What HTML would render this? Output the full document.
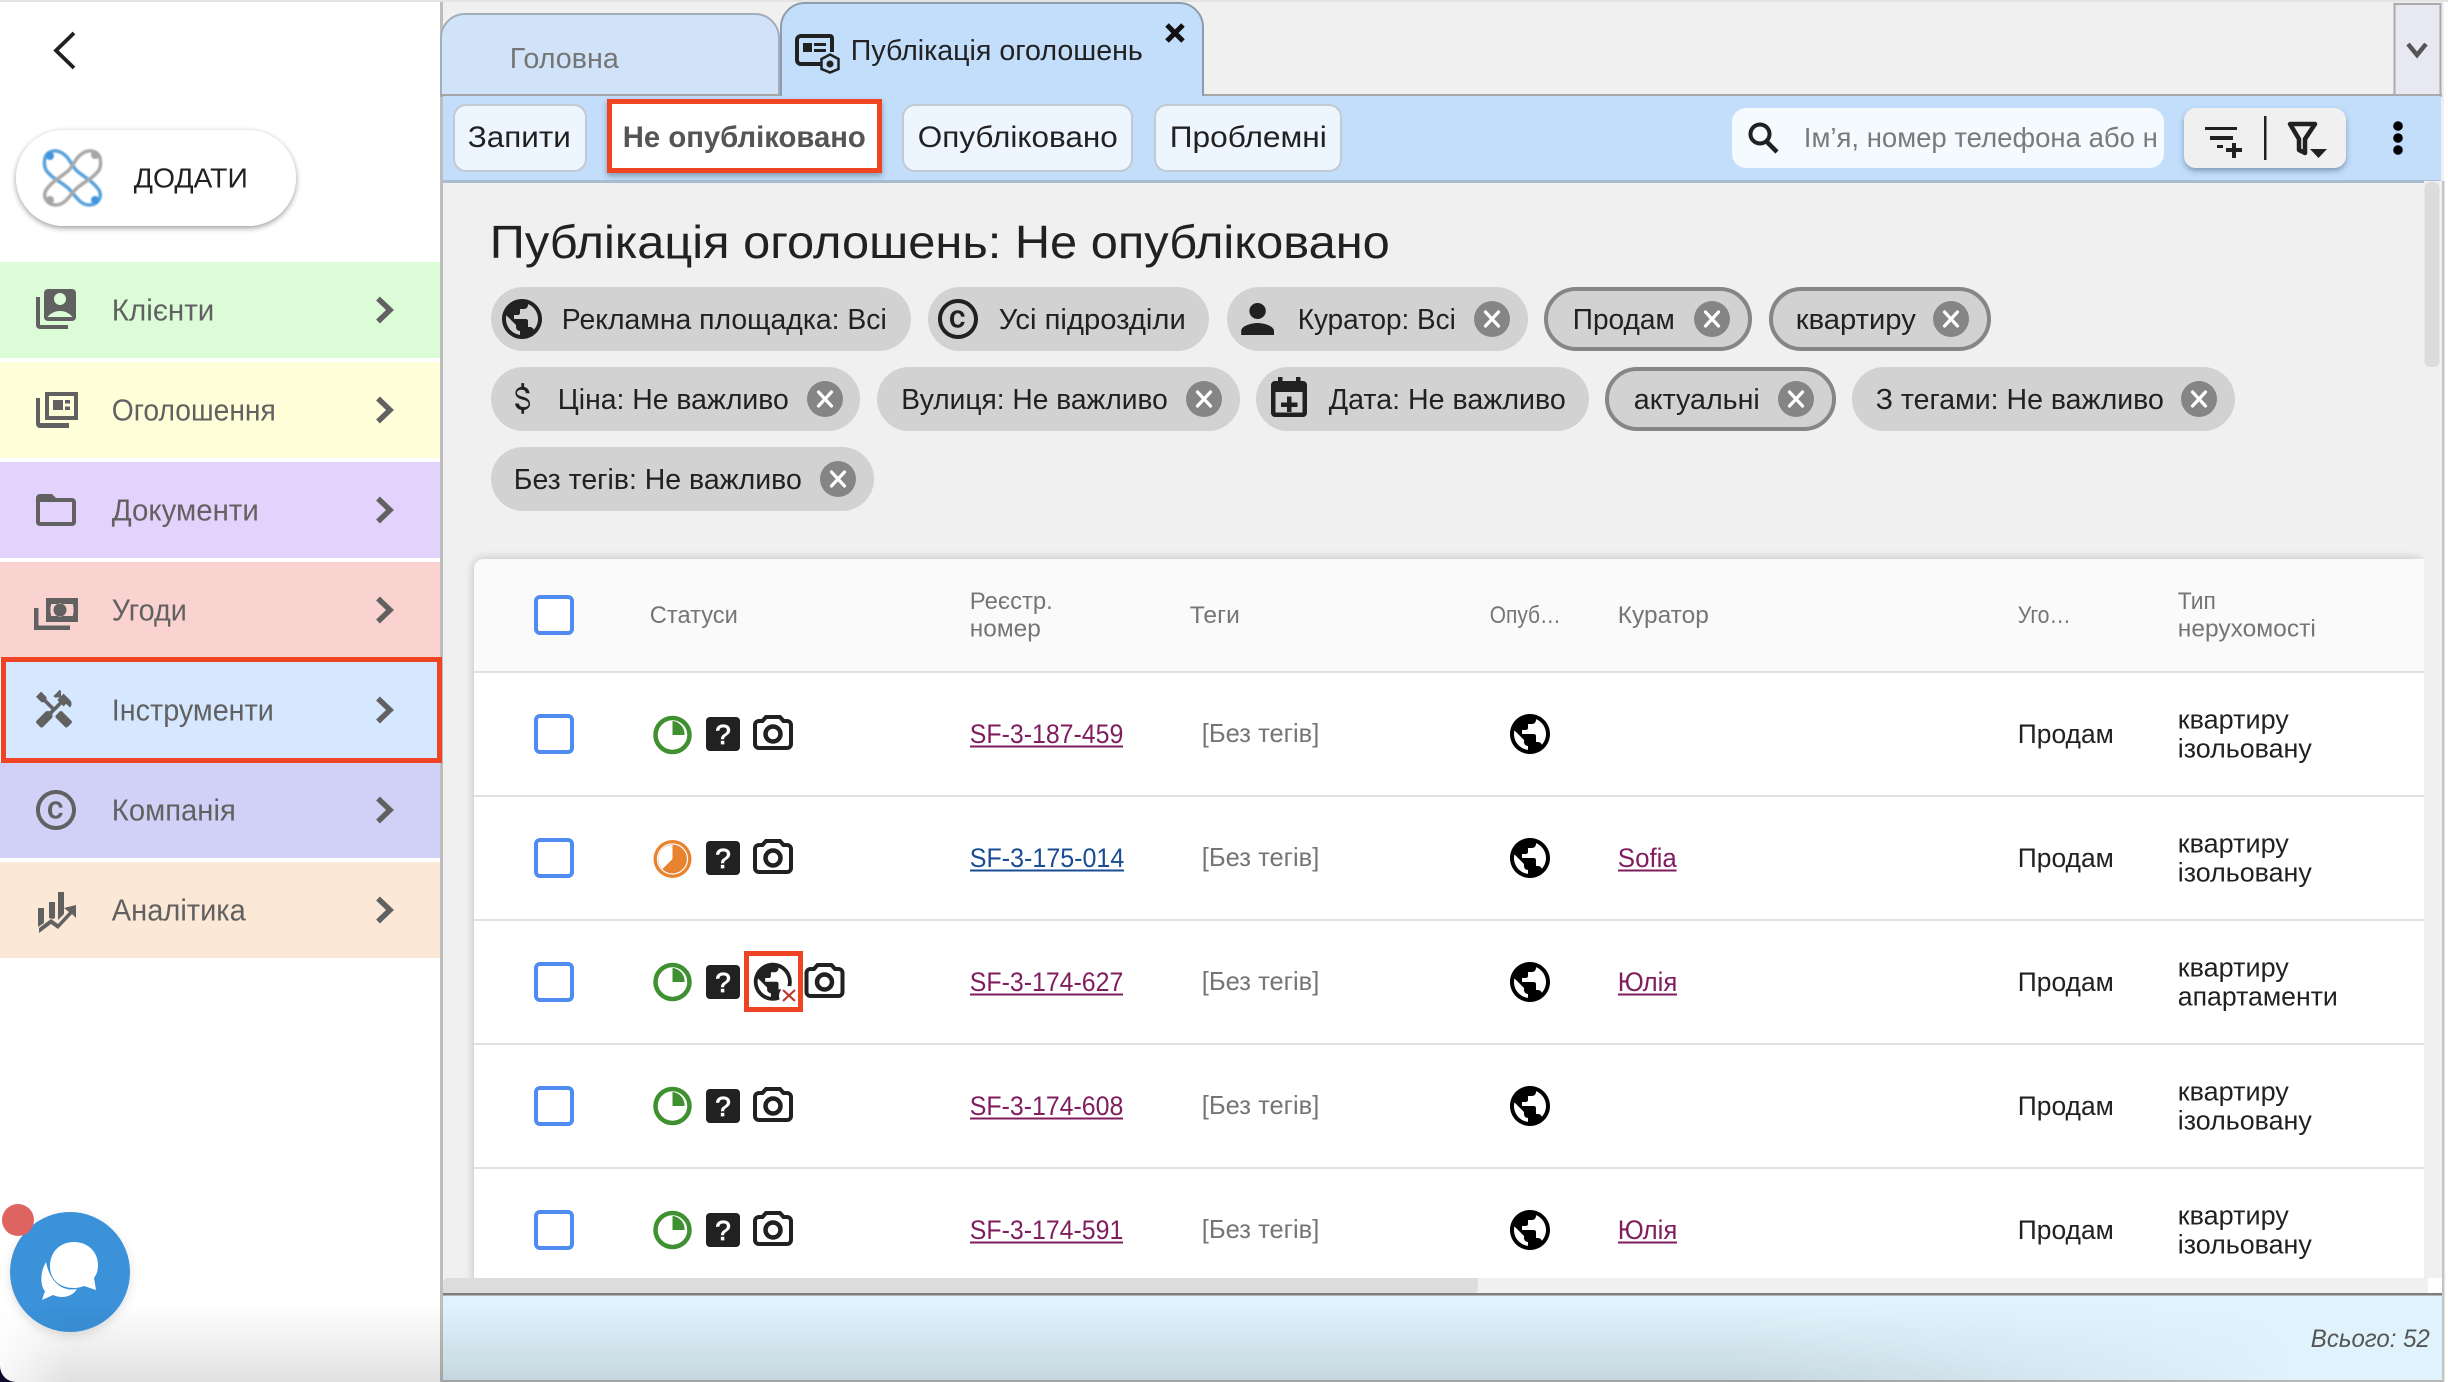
<!DOCTYPE html>
<html lang="uk"><head><meta charset="utf-8"><title>Публікація оголошень</title>
<style>
html,body{margin:0;padding:0;background:#fff;width:2448px;height:1382px;overflow:hidden}
svg{display:block}
text{font-family:"Liberation Sans",sans-serif;white-space:pre;transform:translateX(-1.2px)}
.m{font-size:31px;fill:#616161}
.b{font-size:30px;fill:#212121}
.c{font-size:28.5px;fill:#212121}
.h{font-size:24px;fill:#757575}
.r{font-size:26.5px;fill:#212121}
.t{font-size:26px;fill:#757575}
.mar{fill:#7f1d5e}.blu{fill:#1a4c94}
.ln{stroke-linecap:butt}
</style></head><body>
<svg xmlns="http://www.w3.org/2000/svg" width="2448" height="1382" viewBox="0 0 2448 1382">
<defs>
<filter id="s1" x="-10%" y="-20%" width="120%" height="150%"><feDropShadow dx="0" dy="2" stdDeviation="3" flood-color="#000" flood-opacity=".4"/></filter>
<filter id="s2" x="-5%" y="-20%" width="110%" height="150%"><feDropShadow dx="0" dy="3" stdDeviation="3" flood-color="#33475f" flood-opacity=".45"/></filter>
<filter id="s3" x="-2%" y="-3%" width="104%" height="106%"><feGaussianBlur stdDeviation="5"/></filter>
<filter id="bl"><feGaussianBlur stdDeviation=".8"/></filter>
<filter id="s4" x="-20%" y="-20%" width="140%" height="140%"><feDropShadow dx="0" dy="4" stdDeviation="5" flood-color="#000" flood-opacity=".12"/></filter>
<linearGradient id="vg" x1="0" y1="0" x2="0" y2="1"><stop offset="0" stop-color="#000" stop-opacity="0"/><stop offset="1" stop-color="#000" stop-opacity=".12"/></linearGradient>
<linearGradient id="hg" x1="0" y1="0" x2="1" y2="0"><stop offset="0" stop-color="#fff" stop-opacity=".2"/><stop offset=".03" stop-color="#fff"/><stop offset=".75" stop-color="#fff"/><stop offset="1" stop-color="#fff" stop-opacity="0"/></linearGradient>
<mask id="mk" maskUnits="userSpaceOnUse" x="0" y="1290" width="2300" height="92"><rect x="0" y="1290" width="2300" height="92" fill="url(#hg)"/></mask>
<symbol id="globe" viewBox="0 0 24 24" width="24" height="24" overflow="visible"><path fill-rule="evenodd" d="M12 2C6.48 2 2 6.48 2 12s4.48 10 10 10 10-4.48 10-10S17.52 2 12 2zm-1 17.93c-3.95-.49-7-3.85-7-7.93 0-.62.08-1.21.21-1.79L9 15v1c0 1.1.9 2 2 2v1.93zm6.9-2.54c-.26-.81-1-1.39-1.9-1.39h-1v-3c0-.55-.45-1-1-1H8v-2h2c.55 0 1-.45 1-1V7h2c1.1 0 2-.9 2-2v-.41c2.93 1.19 5 4.06 5 7.41 0 2.08-.8 3.97-2.1 5.39z"/></symbol>
<symbol id="copy" viewBox="0 0 24 24" width="24" height="24" overflow="visible"><path fill-rule="evenodd" d="M11.88 9.14c1.28.06 1.61 1.15 1.63 1.66h1.79c-.08-1.98-1.49-3.19-3.45-3.19C9.64 7.61 8 9 8 12.14c0 1.94.93 4.24 3.84 4.24 2.22 0 3.41-1.65 3.44-2.95h-1.79c-.03.59-.45 1.38-1.63 1.44-1.31-.04-1.86-1.06-1.86-2.73 0-2.89 1.28-2.98 1.88-3zM12 2C6.48 2 2 6.48 2 12s4.48 10 10 10 10-4.48 10-10S17.52 2 12 2zm0 18c-4.41 0-8-3.59-8-8s3.59-8 8-8 8 3.59 8 8-3.59 8-8 8z"/></symbol>
<g id="cb"><rect x="-18" y="-18" width="36" height="36" rx="4" fill="#fff" stroke="#4f8bf0" stroke-width="4"/></g>
<g id="q"><rect x="-17" y="-17" width="34" height="34" rx="4" fill="#212121"/><text x="1.200" y="10" text-anchor="middle" style="font-size:28px;font-weight:400;stroke:#fff;stroke-width:.8;fill:#fff">?</text></g>
<g id="cam"><path d="M-13-13h3l3.500-4h14l3.500 4h3.500a4 4 0 0 1 4 4v19a4 4 0 0 1-4 4h-28a4 4 0 0 1-4-4v-19a4 4 0 0 1 4-4z" fill="#fff" stroke="#212121" stroke-width="4" transform="translate(-.5 0)"/><circle cx="0" cy="0" r="7.500" fill="none" stroke="#212121" stroke-width="4.500"/></g>
<g id="gc"><circle r="17" fill="#fff" stroke="#3f9030" stroke-width="4.500"/><path d="M0 0V-14a13 13 0 0 1 12 14Z" fill="#3f9030"/></g>
<g id="x"><circle r="18" fill="#858585"/><path d="M-6.500-7L6.500 7M6.500-7L-6.500 7" stroke="#fff" stroke-width="3.200" stroke-linecap="round"/></g>
<path id="chev" d="M-6-11.500L6 0-6 11.500" fill="none" stroke="#616161" stroke-width="5.500" stroke-linejoin="miter"/>
</defs>

<!-- base -->
<rect width="2448" height="1382" fill="#fff"/>
<rect x="440" y="0" width="2004" height="1382" fill="#f0f0f0"/>
<rect x="0" y="0" width="2448" height="2" fill="#e4e4e4"/>
<rect x="440" y="2" width="3" height="1380" fill="#bdbdbd"/>

<!-- sidebar -->
<path d="M74 33L56 50.500 74 68" fill="none" stroke="#212121" stroke-width="3.800"/>
<rect x="16" y="130" width="280" height="96" rx="48" fill="#fff" filter="url(#s1)"/>
<g fill="none" stroke-width="3.500" filter="url(#bl)">
<path d="M45 158C47 151 55 149 62 153C69 157 70 163 76 170C82 176 92 180 99 190C103 198 97 205 89 205C81 205 76 197 70 190C64 183 52 179 46 170C44 166 44 162 45 158Z" stroke="#5aa3dc"/>
<path d="M100 158C98 151 90 149 83 153C76 157 75 163 69 170C63 176 53 180 46 190C42 198 48 205 56 205C64 205 69 197 75 190C81 183 93 179 99 170C101 166 101 162 100 158Z" stroke="#a9a9a9"/>
<circle cx="50" cy="156" r="4" fill="#3f94dc" stroke="none"/><circle cx="95" cy="155" r="4" fill="#a5a5a5" stroke="none"/><circle cx="50" cy="200" r="4" fill="#a5a5a5" stroke="none"/><circle cx="95" cy="200" r="4" fill="#3f94dc" stroke="none"/>
</g>
<text x="135" y="187.500" textLength="114" lengthAdjust="spacingAndGlyphs" style="font-size:28px;fill:#212121">ДОДАТИ</text>

<rect x="0" y="262" width="440" height="96" fill="#dcfcd8"/>
<rect x="0" y="362" width="440" height="96" fill="#fefed8"/>
<rect x="0" y="462" width="440" height="96" fill="#e3d2fb"/>
<rect x="0" y="562" width="440" height="96" fill="#fad2d0"/>
<rect x="0" y="762" width="440" height="96" fill="#d1d1f8"/>
<rect x="0" y="862" width="440" height="96" fill="#fbe8d6"/>
<rect x="3.500" y="659.500" width="436" height="101" fill="#d5e8ff" stroke="#ef4423" stroke-width="5"/>

<g fill="#616161">
<g transform="translate(32 285) scale(2)"><path fill-rule="evenodd" d="M4 6H2v14c0 1.100.9 2 2 2h14v-2H4V6zm16-4H8c-1.100 0-2 .9-2 2v12c0 1.100.9 2 2 2h12c1.100 0 2-.9 2-2V4c0-1.100-.9-2-2-2zm-6 2c1.660 0 3 1.340 3 3s-1.340 3-3 3-3-1.340-3-3 1.340-3 3-3zM7.760 16c1.470-1.830 3.710-3 6.240-3s4.770 1.170 6.240 3H7.760z"/></g>
<path fill-rule="evenodd" d="M45 392h33v28H45zM49 396v20h25v-20zM53 400h10v10H53zM65 400h5v3.500h-5zM65 406.500h5v3.500h-5zM36 398h4v25h29v5H40a4 4 0 0 1-4-4z"/>
<g transform="translate(32 486) scale(2)"><path d="M20 6h-8l-2-2H4c-1.100 0-1.990.9-1.990 2L2 18c0 1.100.9 2 2 2h16c1.100 0 2-.9 2-2V8c0-1.100-.9-2-2-2zm0 12H4V8h16v10z"/></g>
<path fill-rule="evenodd" d="M46 598h32v24H46zM51 604a4 4 0 0 1-.5 3v6a4 4 0 0 1 .5 3h22a4 4 0 0 1 .5-3v-6a4 4 0 0 1-.5-3zM60 603.500a6.500 6.500 0 1 1 0 13a6.500 6.500 0 1 1 0-13zM34 608h4.500v17.500H70v4.500H34z"/>
<g transform="translate(32.400 688) scale(1.800)"><path d="M21.670 18.170l-5.300-5.300h-.99l-2.540 2.540v.99l5.300 5.300c.39.39 1.020.39 1.410 0l2.120-2.120c.39-.38.39-1.020 0-1.410zM17.340 10.190l1.410-1.410 2.120 2.120c1.170-1.170 1.170-3.070 0-4.240l-3.540-3.540-1.410 1.410V1.710l-.7-.71-3.540 3.540.71.71h2.830l-1.410 1.410 1.060 1.060-2.890 2.890-4.130-4.130V5.060L4.830 2.040 2 4.870 5.030 7.900h1.410l4.130 4.130-.85.85H7.600l-5.300 5.300c-.39.39-.39 1.020 0 1.410l2.120 2.120c.39.39 1.020.39 1.410 0l5.300-5.300v-2.120l5.150-5.150 1.060 1.050z"/></g>
<g transform="translate(32 786) scale(2)"><use href="#copy"/></g>
<path d="M38 908h6v15l-6 4zM49 902h6v16l-2 1-4-1zM58 892h6v22l-6 6zM76 905v13l-4-4-14 15-7-5-12 9v-5l12-9 7 5 11-12-5-4z"/>
</g>
<text class="m" x="113" y="320.500" textLength="102.500" lengthAdjust="spacingAndGlyphs">Клієнти</text>
<text class="m" x="113" y="420.500" textLength="164" lengthAdjust="spacingAndGlyphs">Оголошення</text>
<text class="m" x="113" y="520.500" textLength="147" lengthAdjust="spacingAndGlyphs">Документи</text>
<text class="m" x="113" y="620.500" textLength="75" lengthAdjust="spacingAndGlyphs">Угоди</text>
<text class="m" x="113" y="720.500" textLength="162" lengthAdjust="spacingAndGlyphs">Інструменти</text>
<text class="m" x="113" y="820.500" textLength="124" lengthAdjust="spacingAndGlyphs">Компанія</text>
<text class="m" x="113" y="920.500" textLength="134" lengthAdjust="spacingAndGlyphs">Аналітика</text>
<use href="#chev" x="384" y="310"/><use href="#chev" x="384" y="410"/><use href="#chev" x="384" y="510"/><use href="#chev" x="384" y="610"/><use href="#chev" x="384" y="710"/><use href="#chev" x="384" y="810"/><use href="#chev" x="384" y="910"/>

<!-- chat -->
<circle cx="70" cy="1272" r="60" fill="#3b92d9" filter="url(#s4)"/>
<circle cx="18" cy="1220" r="16" fill="#dd6460"/>
<path d="M46 1262C40 1272 40 1286 45 1291L42 1300 53 1295C62 1299 72 1297 77 1289 62 1292 50 1282 46 1262Z" fill="#fff"/>
<path d="M74 1242C60 1242 50 1252 50 1266 50 1280 60 1288 74 1288 78 1288 81 1287 84 1286L96 1290 94 1278C97 1274 98 1270 98 1265 98 1252 88 1242 74 1242Z" fill="#fff"/>

<!-- tabs -->
<path d="M441 96V38a24 24 0 0 1 24-24h290a24 24 0 0 1 24 24v58" fill="#d0e3f9" stroke="#a3aebb" stroke-width="2"/>
<rect x="440" y="94" width="2002" height="3" fill="#a6a6a6"/>
<path d="M781 96V27a24 24 0 0 1 24-24h374a24 24 0 0 1 24 24v69" fill="#c2defb" stroke="#8e9dae" stroke-width="2"/>
<text x="511" y="68" textLength="109" lengthAdjust="spacingAndGlyphs" style="font-size:29px;fill:#757575">Головна</text>
<text x="852" y="60" textLength="292" lengthAdjust="spacingAndGlyphs" style="font-size:29px;fill:#212121">Публікація оголошень</text>
<path d="M1167 25L1183 41M1183 25L1167 41" stroke="#111" stroke-width="5"/>
<path d="M822 64H801a4 4 0 0 1-4-4V40a4 4 0 0 1 4-4h29a2 2 0 0 1 2 2V52" fill="none" stroke="#212121" stroke-width="4"/>
<rect x="803" y="43" width="9" height="9" fill="#212121"/><rect x="814" y="43" width="12" height="3" fill="#212121"/><rect x="814" y="49" width="12" height="3" fill="#212121"/>
<path d="M830 54.500L838.500 59v10L830 72.500 821.500 69V59Z" fill="none" stroke="#212121" stroke-width="2.500"/><circle cx="830" cy="64" r="3.500" fill="#212121"/>
<rect x="2394.500" y="4" width="46" height="91" fill="#e8e8f2" stroke="#aaa" stroke-width="2"/>
<path d="M2408 44L2417 55 2426 44" fill="none" stroke="#555" stroke-width="4.500"/>

<!-- toolbar -->
<rect x="443" y="96" width="1998" height="85" fill="#c2defb"/>
<rect x="782" y="92" width="420" height="6" fill="#c2defb"/>
<rect x="443" y="180" width="1998" height="3" fill="#a9bdd2"/>
<rect x="454" y="105" width="132" height="66" rx="12" fill="#edf5fe" stroke="#c3c9d0" stroke-width="2"/>
<rect x="609.500" y="101.500" width="270" height="69" fill="#fff" stroke="#ef4423" stroke-width="5" filter="url(#s2)"/>
<rect x="903" y="105" width="229" height="66" rx="12" fill="#edf5fe" stroke="#c3c9d0" stroke-width="2"/>
<rect x="1155" y="105" width="186" height="66" rx="12" fill="#edf5fe" stroke="#c3c9d0" stroke-width="2"/>
<text class="b" x="469" y="147" textLength="103" lengthAdjust="spacingAndGlyphs">Запити</text>
<text class="b" x="624" y="147" textLength="243" lengthAdjust="spacingAndGlyphs" style="font-weight:700;fill:#555">Не опубліковано</text>
<text class="b" x="919" y="147" textLength="200" lengthAdjust="spacingAndGlyphs">Опубліковано</text>
<text class="b" x="1171" y="147" textLength="157" lengthAdjust="spacingAndGlyphs">Проблемні</text>

<rect x="1732" y="108" width="432" height="60" rx="14" fill="#f5faff"/>
<circle cx="1760" cy="134" r="9.500" fill="none" stroke="#212121" stroke-width="4"/><path d="M1767 142L1777 152" stroke="#212121" stroke-width="4.500"/>
<text x="1805" y="147" textLength="354" lengthAdjust="spacingAndGlyphs" style="font-size:28px;fill:#7a7a7a">Ім’я, номер телефона або н</text>
<rect x="2184" y="108" width="162" height="60" rx="12" fill="#f0f0f0" filter="url(#s2)"/>
<g fill="#212121"><rect x="2205" y="127" width="32" height="3"/><rect x="2210" y="136" width="23" height="4"/><rect x="2217" y="145" width="6" height="3"/><rect x="2226" y="148" width="16" height="4"/><rect x="2232" y="143" width="4" height="15"/><rect x="2264" y="116" width="2.500" height="44"/></g>
<path d="M2290 124H2315L2305 139V153L2299 150V139Z" fill="none" stroke="#212121" stroke-width="4.500" stroke-linejoin="round"/>
<path d="M2310 149H2327L2318.500 158Z" fill="#212121"/>
<circle cx="2398" cy="126" r="4.800"/><circle cx="2398" cy="138" r="4.800"/><circle cx="2398" cy="150" r="4.800"/>

<!-- title -->
<text x="491" y="258" textLength="900" lengthAdjust="spacingAndGlyphs" style="font-size:46px;fill:#212121">Публікація оголошень: Не опубліковано</text>

<!-- chips -->
<g fill="#d2d2d2">
<rect x="491" y="287" width="420" height="64" rx="32"/>
<rect x="928" y="287" width="281" height="64" rx="32"/>
<rect x="1227" y="287" width="301" height="64" rx="32"/>
<rect x="491" y="367" width="369" height="64" rx="32"/>
<rect x="877" y="367" width="363" height="64" rx="32"/>
<rect x="1256" y="367" width="333" height="64" rx="32"/>
<rect x="1852" y="367" width="383" height="64" rx="32"/>
<rect x="491" y="447" width="383" height="64" rx="32"/>
</g>
<g fill="#d2d2d2" stroke="#868686" stroke-width="4">
<rect x="1546" y="289" width="204" height="60" rx="30"/>
<rect x="1771" y="289" width="218" height="60" rx="30"/>
<rect x="1607" y="369" width="227" height="60" rx="30"/>
</g>
<g fill="#212121">
<g transform="translate(498 295) scale(2)"><use href="#globe"/></g>
<g transform="translate(934 295) scale(2)"><use href="#copy"/></g>
<g transform="translate(1233 295) scale(2.050 2)"><path d="M12 12c2.210 0 4-1.790 4-4s-1.790-4-4-4-4 1.790-4 4 1.790 4 4 4zm0 2c-2.670 0-8 1.340-8 4v2h16v-2c0-2.660-5.330-4-8-4z"/></g>
<g transform="translate(502 378) scale(1.700)"><path d="M11.800 10.900c-2.270-.59-3-1.200-3-2.150 0-1.090 1.010-1.850 2.700-1.850 1.780 0 2.440.85 2.500 2.100h2.210c-.07-1.720-1.120-3.300-3.210-3.810V3h-1.600v2.160c-1.940.42-3.500 1.680-3.500 3.610 0 2.310 1.910 3.460 4.700 4.130 2.500.6 3 1.480 3 2.410 0 .69-.49 1.790-2.700 1.790-2.060 0-2.870-.92-2.980-2.100h-2.200c.12 2.190 1.760 3.420 3.680 3.830V21h1.600v-2.150c1.950-.37 3.500-1.500 3.500-3.550 0-2.840-2.430-3.810-4.700-4.400z"/></g>
<rect x="1278" y="377" width="4.500" height="8"/><rect x="1296" y="377" width="4.500" height="8"/>
<path fill-rule="evenodd" d="M1275 381h28a4 4 0 0 1 4 4v28a4 4 0 0 1-4 4h-28a4 4 0 0 1-4-4v-28a4 4 0 0 1 4-4zM1275.500 392v20.500h27V392zM1287 396.500h4.500v6h6v4.500h-6v6h-4.500v-6h-6v-4.500h6z"/>
</g>
<text class="c" x="563" y="329" textLength="325" lengthAdjust="spacingAndGlyphs">Рекламна площадка: Всі</text>
<text class="c" x="1000" y="329" textLength="187" lengthAdjust="spacingAndGlyphs">Усі підрозділи</text>
<text class="c" x="1299" y="329" textLength="158" lengthAdjust="spacingAndGlyphs">Куратор: Всі</text>
<text class="c" x="1574" y="329" textLength="102" lengthAdjust="spacingAndGlyphs">Продам</text>
<text class="c" x="1797" y="329" textLength="120" lengthAdjust="spacingAndGlyphs">квартиру</text>
<text class="c" x="559" y="409" textLength="231" lengthAdjust="spacingAndGlyphs">Ціна: Не важливо</text>
<text class="c" x="902.500" y="409" textLength="266.500" lengthAdjust="spacingAndGlyphs">Вулиця: Не важливо</text>
<text class="c" x="1330" y="409" textLength="237" lengthAdjust="spacingAndGlyphs">Дата: Не важливо</text>
<text class="c" x="1635" y="409" textLength="126" lengthAdjust="spacingAndGlyphs">актуальні</text>
<text class="c" x="1877" y="409" textLength="288" lengthAdjust="spacingAndGlyphs">З тегами: Не важливо</text>
<text class="c" x="515" y="489" textLength="288" lengthAdjust="spacingAndGlyphs">Без тегів: Не важливо</text>
<use href="#x" x="1492" y="319"/><use href="#x" x="1712" y="319"/><use href="#x" x="1951" y="319"/>
<use href="#x" x="825" y="399"/><use href="#x" x="1204" y="399"/><use href="#x" x="1796" y="399"/><use href="#x" x="2199" y="399"/>
<use href="#x" x="838" y="479"/>

<!-- table -->
<rect x="474" y="559" width="1950" height="730" rx="10" fill="#000" opacity=".22" filter="url(#s3)"/>
<rect x="2424" y="181" width="18" height="1100" fill="#f0f0f0"/>
<path d="M474 1278V569a10 10 0 0 1 10-10H2424V1278Z" fill="#fff"/>
<path d="M474 671V569a10 10 0 0 1 10-10H2424V671Z" fill="#fafafa"/>
<g fill="#e0e0e0"><rect x="474" y="671" width="1950" height="2"/><rect x="474" y="795" width="1950" height="2"/><rect x="474" y="919" width="1950" height="2"/><rect x="474" y="1043" width="1950" height="2"/><rect x="474" y="1167" width="1950" height="2"/></g>

<!-- vertical scrollbar -->
<rect x="2424.500" y="182" width="15" height="185" rx="6" fill="#dcdcdc"/>

<text class="h" x="651" y="623" textLength="88" lengthAdjust="spacingAndGlyphs">Статуси</text>
<text class="h" x="971" y="609" textLength="83" lengthAdjust="spacingAndGlyphs">Реєстр.</text>
<text class="h" x="971" y="636.500" textLength="71" lengthAdjust="spacingAndGlyphs">номер</text>
<text class="h" x="1191" y="623" textLength="50" lengthAdjust="spacingAndGlyphs">Теги</text>
<text class="h" x="1491" y="623" textLength="71" lengthAdjust="spacingAndGlyphs">Опуб…</text>
<text class="h" x="1619" y="623" textLength="91" lengthAdjust="spacingAndGlyphs">Куратор</text>
<text class="h" x="2019" y="623" textLength="53" lengthAdjust="spacingAndGlyphs">Уго…</text>
<text class="h" x="2179" y="609" textLength="38" lengthAdjust="spacingAndGlyphs">Тип</text>
<text class="h" x="2179" y="636.500" textLength="138" lengthAdjust="spacingAndGlyphs">нерухомості</text>

<use href="#cb" x="554" y="615"/>
<use href="#cb" x="554" y="734"/><use href="#cb" x="554" y="858"/><use href="#cb" x="554" y="982"/><use href="#cb" x="554" y="1106"/><use href="#cb" x="554" y="1230"/>

<!-- statuses -->
<use href="#gc" x="672.500" y="735"/>
<g transform="translate(672.500 859)"><circle r="19" fill="#e8832f"/><circle r="15" fill="none" stroke="#fff" stroke-width="1.200"/><path d="M0 0V-14A14 14 0 0 0-10 10Z" fill="#fff"/></g>
<use href="#gc" x="672.500" y="982"/><use href="#gc" x="672.500" y="1106"/><use href="#gc" x="672.500" y="1230"/>
<use href="#q" x="723" y="734"/><use href="#q" x="723" y="858"/><use href="#q" x="723" y="982"/><use href="#q" x="723" y="1106"/><use href="#q" x="723" y="1230"/>
<use href="#cam" x="773" y="734"/><use href="#cam" x="773" y="858"/><use href="#cam" x="824.500" y="982"/><use href="#cam" x="773" y="1106"/><use href="#cam" x="773" y="1230"/>

<g transform="translate(750 959) scale(1.900)" fill="#212121"><use href="#globe"/></g>
<circle cx="789" cy="996" r="10" fill="#fff"/>
<path d="M783 990L795 1001M795 990L783 1001" stroke="#c0342c" stroke-width="2.200"/>
<rect x="746.500" y="953.500" width="54" height="56" fill="none" stroke="#ef4423" stroke-width="5"/>

<!-- reg numbers -->
<text class="r mar" x="971" y="743" textLength="153.500" lengthAdjust="spacingAndGlyphs">SF-3-187-459</text><rect x="970" y="745.500" width="153" height="2" fill="#7f1d5e"/>
<text class="r blu" x="971" y="867" textLength="154.500" lengthAdjust="spacingAndGlyphs">SF-3-175-014</text><rect x="970" y="869.500" width="154" height="2" fill="#1a4c94"/>
<text class="r mar" x="971" y="991" textLength="153.500" lengthAdjust="spacingAndGlyphs">SF-3-174-627</text><rect x="970" y="993.500" width="153" height="2" fill="#7f1d5e"/>
<text class="r mar" x="971" y="1115" textLength="153.500" lengthAdjust="spacingAndGlyphs">SF-3-174-608</text><rect x="970" y="1117.500" width="153" height="2" fill="#7f1d5e"/>
<text class="r mar" x="971" y="1239" textLength="153.500" lengthAdjust="spacingAndGlyphs">SF-3-174-591</text><rect x="970" y="1241.500" width="153" height="2" fill="#7f1d5e"/>

<text class="t" x="1203" y="742" textLength="117.500" lengthAdjust="spacingAndGlyphs">[Без тегів]</text>
<text class="t" x="1203" y="866" textLength="117.500" lengthAdjust="spacingAndGlyphs">[Без тегів]</text>
<text class="t" x="1203" y="990" textLength="117.500" lengthAdjust="spacingAndGlyphs">[Без тегів]</text>
<text class="t" x="1203" y="1114" textLength="117.500" lengthAdjust="spacingAndGlyphs">[Без тегів]</text>
<text class="t" x="1203" y="1238" textLength="117.500" lengthAdjust="spacingAndGlyphs">[Без тегів]</text>

<g fill="#000">
<g transform="translate(1506 710) scale(2)"><use href="#globe"/></g>
<g transform="translate(1506 834) scale(2)"><use href="#globe"/></g>
<g transform="translate(1506 958) scale(2)"><use href="#globe"/></g>
<g transform="translate(1506 1082) scale(2)"><use href="#globe"/></g>
<g transform="translate(1506 1206) scale(2)"><use href="#globe"/></g>
</g>

<text class="r mar" x="1619" y="867" textLength="59" lengthAdjust="spacingAndGlyphs">Sofia</text><rect x="1618" y="869.500" width="58.500" height="2" fill="#7f1d5e"/>
<text class="r mar" x="1619" y="991" textLength="59.500" lengthAdjust="spacingAndGlyphs">Юлія</text><rect x="1618" y="993.500" width="59" height="2" fill="#7f1d5e"/>
<text class="r mar" x="1619" y="1239" textLength="59.500" lengthAdjust="spacingAndGlyphs">Юлія</text><rect x="1618" y="1241.500" width="59" height="2" fill="#7f1d5e"/>

<text class="r" x="2019" y="743" textLength="96" lengthAdjust="spacingAndGlyphs">Продам</text>
<text class="r" x="2019" y="867" textLength="96" lengthAdjust="spacingAndGlyphs">Продам</text>
<text class="r" x="2019" y="991" textLength="96" lengthAdjust="spacingAndGlyphs">Продам</text>
<text class="r" x="2019" y="1115" textLength="96" lengthAdjust="spacingAndGlyphs">Продам</text>
<text class="r" x="2019" y="1239" textLength="96" lengthAdjust="spacingAndGlyphs">Продам</text>

<text class="r" x="2179" y="728.500" textLength="111" lengthAdjust="spacingAndGlyphs">квартиру</text><text class="r" x="2179" y="757.500" textLength="134" lengthAdjust="spacingAndGlyphs">ізольовану</text>
<text class="r" x="2179" y="852.500" textLength="111" lengthAdjust="spacingAndGlyphs">квартиру</text><text class="r" x="2179" y="881.500" textLength="134" lengthAdjust="spacingAndGlyphs">ізольовану</text>
<text class="r" x="2179" y="976.500" textLength="111" lengthAdjust="spacingAndGlyphs">квартиру</text><text class="r" x="2179" y="1005.500" textLength="160" lengthAdjust="spacingAndGlyphs">апартаменти</text>
<text class="r" x="2179" y="1100.500" textLength="111" lengthAdjust="spacingAndGlyphs">квартиру</text><text class="r" x="2179" y="1129.500" textLength="134" lengthAdjust="spacingAndGlyphs">ізольовану</text>
<text class="r" x="2179" y="1224.500" textLength="111" lengthAdjust="spacingAndGlyphs">квартиру</text><text class="r" x="2179" y="1253.500" textLength="134" lengthAdjust="spacingAndGlyphs">ізольовану</text>

<!-- h scrollbar -->
<rect x="443" y="1278" width="1985" height="16" fill="#f0f0f0"/>
<rect x="2428" y="1278" width="14" height="16" fill="#fff"/>
<path d="M443 1294V1283a5 5 0 0 1 5-5H1478V1288a6 6 0 0 1-6 6Z" fill="#dcdcdc"/>

<!-- bottom bar -->
<rect x="443" y="1294" width="2001" height="86" fill="#e0f3fc"/>
<rect x="443" y="1293" width="2001" height="2.500" fill="#7d7d7d"/>
<rect x="443" y="1380" width="2001" height="2" fill="#b8b8b8"/>
<text x="2312" y="1347" textLength="119" lengthAdjust="spacingAndGlyphs" style="font-size:25px;font-style:italic;fill:#555">Всього: 52</text>
<rect x="2442" y="181" width="2.500" height="1201" fill="#c4c4c4"/>

<!-- window shadow overlay -->
<rect x="0" y="1305" width="2300" height="77" fill="url(#vg)" mask="url(#mk)"/>
<path d="M0 1366V1382H16A16 16 0 0 1 0 1366Z" fill="#120a2a"/>
</svg>
</body></html>
